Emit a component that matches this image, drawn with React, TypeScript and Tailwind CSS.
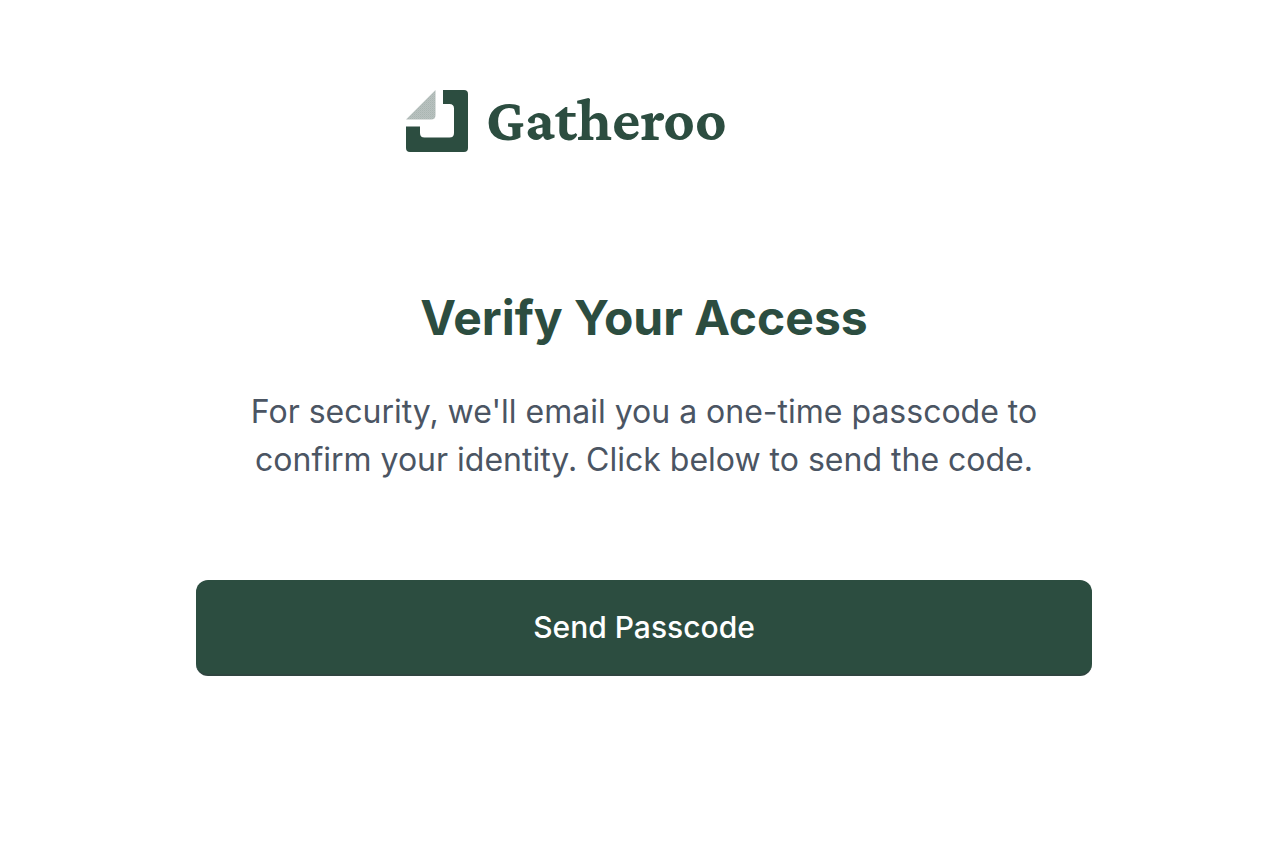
function Logo() {
  return (
    <div className="mx-auto flex w-full max-w-[476px] items-center gap-[18px]">
      <svg className="size-[62px] shrink-0" viewBox="0 0 62 62" fill="none" aria-hidden="true">
        <defs>
          <pattern id="fold" width="2" height="2" patternUnits="userSpaceOnUse">
            <rect width="2" height="2" fill="#b9c2c0" />
            <rect width="1" height="1" fill="#a9b5b1" />
            <rect x="1" y="1" width="1" height="1" fill="#b1bbb8" />
          </pattern>
        </defs>
        <path d="M29.5 0V25Q29.5 29.5 25 29.5H0Z" fill="url(#fold)" />
        <path
          d="M37 0H58Q62 0 62 4V58Q62 62 58 62H4Q0 62 0 58V36.5H14V43Q14 47.5 18.5 47.5H43.5Q48 47.5 48 43V18.5Q48 14 43.5 14H37Z"
          fill="#2c4d40"
        />
      </svg>
      <span className="pb-1 font-['Crimson_Pro','Liberation_Serif',serif] text-[61px] leading-[56px] font-bold text-[#2c4d40]">
        Gatheroo
      </span>
    </div>
  )
}

export default function App() {
  return (
    <main className="min-h-screen bg-white pt-[90px] pr-4 pb-16 pl-6 font-['Inter',sans-serif]">
      <div className="mx-auto w-full max-w-4xl">
        <Logo />

        <div className="mt-[136px] text-center">
          <h1 className="text-5xl leading-[60px] font-bold text-[#2c4d40]">Verify Your Access</h1>
          <p className="mx-auto mt-10 max-w-[800px] text-[32px] leading-[48px] text-[#4b5563]">
            For security, we'll email you a one-time passcode to confirm your identity. Click below to send the code.
          </p>
        </div>

        <button
          type="button"
          className="mt-24 h-24 w-full cursor-pointer rounded-xl border-b-2 border-[#2f4540] bg-[#2c4d40] text-[30px] font-medium text-white"
        >
          Send Passcode
        </button>
      </div>
    </main>
  )
}
